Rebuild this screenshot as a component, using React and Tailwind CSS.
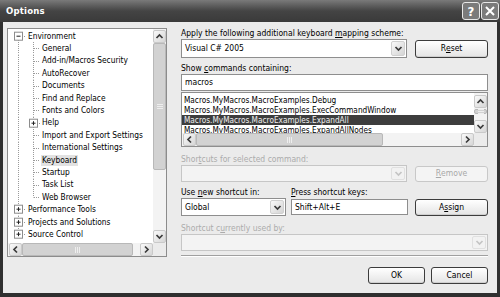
import React from "react";

const tree = [
  { label: "Environment", kind: "root-open" },
  { label: "General", kind: "child" },
  { label: "Add-in/Macros Security", kind: "child" },
  { label: "AutoRecover", kind: "child" },
  { label: "Documents", kind: "child" },
  { label: "Find and Replace", kind: "child" },
  { label: "Fonts and Colors", kind: "child" },
  { label: "Help", kind: "child-plus" },
  { label: "Import and Export Settings", kind: "child" },
  { label: "International Settings", kind: "child" },
  { label: "Keyboard", kind: "child", selected: true },
  { label: "Startup", kind: "child" },
  { label: "Task List", kind: "child" },
  { label: "Web Browser", kind: "child-last" },
  { label: "Performance Tools", kind: "root" },
  { label: "Projects and Solutions", kind: "root" },
  { label: "Source Control", kind: "root-last" },
];

const commands = [
  "Macros.MyMacros.MacroExamples.Debug",
  "Macros.MyMacros.MacroExamples.ExecCommandWindow",
  "Macros.MyMacros.MacroExamples.ExpandAll",
  "Macros.MyMacros.MacroExamples.ExpandAllNodes",
];

function Box({ cx, plus }) {
  return (
    <g>
      <rect x={cx - 4} y={2.2} width="8" height="8" fill="#fff" stroke="#8c8c8c" strokeWidth="1" />
      <line x1={cx - 2} y1={6.2} x2={cx + 2} y2={6.2} stroke="#222" />
      {plus && <line x1={cx} y1={4.2} x2={cx} y2={8.2} stroke="#222" />}
    </g>
  );
}

function TreeGlyph({ kind }) {
  const dot = { stroke: "#9a9a9a", strokeWidth: 1, strokeDasharray: "1 1" };
  const isChild = kind.startsWith("child");
  const w = isChild ? 33 : 19;
  return (
    <svg width={w} height="12.4" className="shrink-0 overflow-visible">
      {kind === "root-open" && <line x1="10.5" y1="10" x2="10.5" y2="12.4" {...dot} />}
      {(kind === "root" || isChild) && <line x1="10.5" y1="0" x2="10.5" y2="12.4" {...dot} />}
      {kind === "root-last" && <line x1="10.5" y1="0" x2="10.5" y2="3" {...dot} />}
      {kind.startsWith("root") && <line x1="14" y1="6.5" x2="18" y2="6.5" {...dot} />}
      {kind.startsWith("root") && <Box cx={10.5} plus={kind !== "root-open"} />}
      {(kind === "child" || kind === "child-plus") && <line x1="25.5" y1="0" x2="25.5" y2="12.4" {...dot} />}
      {kind === "child-last" && <line x1="25.5" y1="0" x2="25.5" y2="6.5" {...dot} />}
      {isChild && kind !== "child-plus" && <line x1="26" y1="6.5" x2="32" y2="6.5" {...dot} />}
      {kind === "child-plus" && <line x1="29" y1="6.5" x2="32" y2="6.5" {...dot} />}
      {kind === "child-plus" && <Box cx={25.5} plus />}
    </svg>
  );
}

function Chevron({ dir = "down", color = "#333" }) {
  const d = {
    down: "M2.5 4 L5.5 7 L8.5 4",
    up: "M2.5 7 L5.5 4 L8.5 7",
    left: "M7 2.5 L4 5.5 L7 8.5",
    right: "M4 2.5 L7 5.5 L4 8.5",
  }[dir];
  return (
    <svg width="11" height="11" viewBox="0 0 11 11">
      <path d={d} fill="none" stroke={color} strokeWidth="1.7" />
    </svg>
  );
}

function ScrollBtn({ dir, className = "" }) {
  return (
    <div className={`w-[13px] h-[13px] shrink-0 rounded-[2px] border border-[#c9c9c9] bg-linear-to-br from-[#fafafa] to-[#d6d6d6] flex items-center justify-center ${className}`}>
      <Chevron dir={dir} color="#3a3a3a" />
    </div>
  );
}

function Thumb({ vertical, className = "" }) {
  return (
    <div className={`rounded-[2px] border border-[#b8b8b8] bg-[#d2d2d2] flex items-center justify-center ${className}`}>
      {vertical ? (
        <div className="flex flex-col gap-[1px]">
          <div className="w-[6px] h-[1px] bg-[#eee]" />
          <div className="w-[6px] h-[1px] bg-[#eee]" />
          <div className="w-[6px] h-[1px] bg-[#eee]" />
        </div>
      ) : (
        <div className="flex gap-[1px]">
          <div className="w-[1px] h-[6px] bg-[#eee]" />
          <div className="w-[1px] h-[6px] bg-[#eee]" />
          <div className="w-[1px] h-[6px] bg-[#eee]" />
        </div>
      )}
    </div>
  );
}

function Combo({ value, disabled, className = "" }) {
  return (
    <div className={`flex items-center border ${disabled ? "border-[#c6c6c6] bg-[#f3f3f3]" : "border-[#8e8e8e] bg-white"} ${className}`}>
      <div className="flex-1 pl-[3px] text-[8.5px] leading-none text-[#000] whitespace-nowrap">{value}</div>
      <div className={`w-[14px] h-[calc(100%-2px)] mr-[1px] rounded-[2px] flex items-center justify-center border ${disabled ? "border-[#e0e0e0] bg-[#f2f2f2]" : "border-[#d0d0d0] bg-linear-to-br from-[#fafafa] to-[#d4d4d4]"}`}>
        <Chevron color={disabled ? "#c4c4c4" : "#3a3a3a"} />
      </div>
    </div>
  );
}

function Btn({ children, disabled, className = "" }) {
  return (
    <div className={`rounded-[3px] border flex items-center justify-center text-[8.5px] leading-none ${disabled ? "border-[#c8c8c8] bg-[#f4f4f4] text-[#a8a8a8]" : "border-[#3c3c3c] bg-linear-to-b from-white to-[#e4e4e4] text-[#000] shadow-[inset_0_-1px_0_#cfcfcf]"} ${className}`}>
      {children}
    </div>
  );
}

function Label({ children, disabled, className = "" }) {
  return (
    <div className={`text-[8.5px] leading-[11px] whitespace-nowrap ${disabled ? "text-[#ababab]" : "text-[#000]"} ${className}`}>
      {children}
    </div>
  );
}

export default function App() {
  return (
    <div className="w-[500px] h-[297px] bg-[#2f2f2f] flex flex-col font-['DejaVu_Sans_Condensed','Liberation_Sans',Arial,sans-serif] overflow-hidden">
      {/* title bar */}
      <div className="h-[22px] shrink-0 flex items-center justify-between bg-linear-to-b from-[#7a7a7a] via-[#444] to-[#3a3a3a] pl-[6px] pr-[1px]">
        <div className="text-white font-bold text-[9.5px] tracking-[0.2px]">Options</div>
        <div className="flex gap-[1px]">
          <div className="w-[18px] h-[18px] rounded-[3px] border border-[#e8e8e8] bg-[#7b7b7b] flex items-center justify-center text-white font-bold text-[13px] leading-none">?</div>
          <div className="w-[18px] h-[18px] rounded-[3px] border border-[#e8e8e8] bg-[#7b7b7b] flex items-center justify-center">
            <svg width="12" height="12" viewBox="0 0 12 12">
              <path d="M2 2 L10 10 M10 2 L2 10" stroke="#fff" strokeWidth="2" />
            </svg>
          </div>
        </div>
      </div>

      {/* body */}
      <div className="flex-1 mx-[3px] mb-[4px] bg-[#ebebeb] flex pt-[6px] pl-[4px] pr-[9px]">
        {/* tree */}
        <div className="w-[160px] h-[229px] shrink-0 border border-[#8c8c8c] bg-white flex flex-col">
          <div className="flex flex-1 min-h-0">
            <div className="flex-1 pt-[1px] overflow-hidden">
              {tree.map((t) => (
                <div key={t.label} className="h-[12.4px] flex items-center text-[8.3px] text-[#000] whitespace-nowrap">
                  <TreeGlyph kind={t.kind} />
                  <span className={`leading-[11px] px-[1px] ${t.selected ? "bg-[#e2e2e2]" : ""}`}>{t.label}</span>
                </div>
              ))}
            </div>
            <div className="w-[13px] flex flex-col bg-[#f3f3f3] pt-[1px]">
              <ScrollBtn dir="up" />
              <Thumb vertical className="h-[127px]" />
              <div className="flex-1" />
              <ScrollBtn dir="down" />
            </div>
          </div>
          <div className="h-[13px] flex bg-[#f3f3f3] pl-[1px]">
            <ScrollBtn dir="left" />
            <Thumb className="w-[111px]" />
            <div className="flex-1" />
            <ScrollBtn dir="right" />
            <div className="w-[13px] bg-[#ebebeb]" />
          </div>
        </div>

        {/* right column */}
        <div className="flex-1 ml-[14px] flex flex-col">
          <Label className="h-[11px]">
            Apply the following additional keyboard <u>m</u>apping scheme:
          </Label>
          <div className="h-[19px] flex items-center justify-between">
            <Combo value="Visual C# 2005" className="w-[226px] h-[19px]" />
            <Btn className="w-[73px] h-[18px]">R<u>e</u>set</Btn>
          </div>
          <Label className="h-[16px] pt-[5px]">
            Show <u>c</u>ommands containing:
          </Label>
          <div className="h-[17px] border border-[#8e8e8e] bg-white flex items-center pl-[3px] text-[8.5px] text-[#000]">macros</div>
          <div className="h-[55px] mt-[1px] border border-[#8e8e8e] bg-white flex flex-col">
            <div className="flex flex-1 min-h-0">
              <div className="flex-1 pt-[2px] overflow-hidden">
                {commands.map((c, i) => (
                  <div
                    key={c}
                    className={`h-[10px] flex items-center pl-[2px] text-[8.2px] whitespace-nowrap ${i === 2 ? "bg-[#3d3d3d] text-[#f0f0f0]" : "text-[#000]"}`}
                  >
                    {c}
                  </div>
                ))}
              </div>
              <div className="w-[13px] flex flex-col pt-[2px] bg-[#f3f3f3]">
                <ScrollBtn dir="up" />
                <Thumb vertical className="h-[5px] mt-[1px]" />
                <div className="flex-1" />
                <ScrollBtn dir="down" />
              </div>
            </div>
            <div className="h-[13px] flex bg-[#f3f3f3] pl-[1px]">
              <ScrollBtn dir="left" />
              <Thumb className="w-[187px]" />
              <div className="flex-1" />
              <ScrollBtn dir="right" />
              <div className="w-[13px] bg-[#ebebeb]" />
            </div>
          </div>

          <Label disabled className="h-[18px] pt-[7px]">
            Shor<u>t</u>cuts for selected command:
          </Label>
          <div className="h-[17px] flex items-center justify-between">
            <Combo disabled value="" className="w-[226px] h-[17px]" />
            <Btn disabled className="w-[73px] h-[16px]"><u>R</u>emove</Btn>
          </div>

          <div className="h-[16px] pt-[5px] flex">
            <Label className="w-[110px]">Use <u>n</u>ew shortcut in:</Label>
            <Label><u>P</u>ress shortcut keys:</Label>
          </div>
          <div className="h-[18px] flex items-center">
            <Combo value="Global" className="w-[105px] h-[18px]" />
            <div className="w-[117px] h-[16px] ml-[5px] border border-[#8e8e8e] bg-white flex items-center pl-[3px] text-[8.5px] text-[#000]">Shift+Alt+E</div>
            <Btn className="w-[73px] h-[17px] ml-auto">A<u>s</u>sign</Btn>
          </div>

          <Label disabled className="h-[18px] pt-[7px]">
            Shortcut c<u>u</u>rrently used by:
          </Label>
          <Combo disabled value="" className="w-full h-[17px]" />

          <div className="mt-[4px] h-[2px] border-t border-[#a0a0a0] border-b border-b-white" />

          <div className="mt-[10px] flex justify-end gap-[6px]">
            <Btn className="w-[57px] h-[17px]">OK</Btn>
            <Btn className="w-[57px] h-[17px]">Cancel</Btn>
          </div>
        </div>
      </div>
    </div>
  );
}
